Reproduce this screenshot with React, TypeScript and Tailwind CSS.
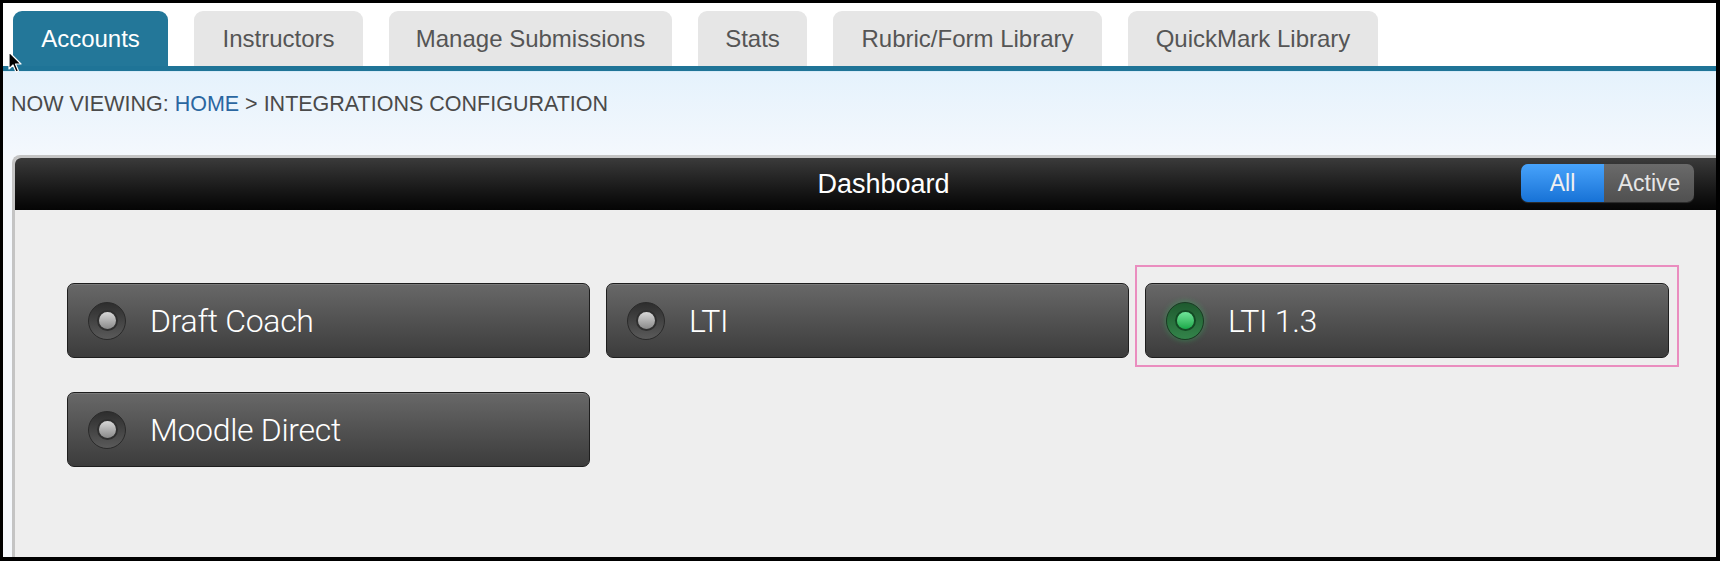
import React from "react";

const TABS = [
  { id: "accounts", label: "Accounts", width: "w-[155px]" },
  { id: "instructors", label: "Instructors", width: "w-[169px]" },
  { id: "submissions", label: "Manage Submissions", width: "w-[283px]" },
  { id: "stats", label: "Stats", width: "w-[109px]" },
  { id: "rubric", label: "Rubric/Form Library", width: "w-[269px]" },
  { id: "quickmark", label: "QuickMark Library", width: "w-[250px]" },
];

const INTEGRATIONS = [
  { id: "draft-coach", label: "Draft Coach", active: false },
  { id: "lti", label: "LTI", active: false },
  { id: "lti13", label: "LTI 1.3", active: true, highlighted: true },
  { id: "moodle", label: "Moodle Direct", active: false },
];

function RadioLight({ on }: { on: boolean }) {
  return (
    <span
      className={`flex items-center justify-center w-[38px] h-[38px] shrink-0 rounded-full border ${
        on
          ? "border-[#173d22] bg-gradient-to-b from-[#1f5a2f] to-[#33844a] shadow-[0_0_6px_rgba(40,200,90,0.45)]"
          : "border-[#2a2a2a] bg-gradient-to-b from-[#2e2e2e] to-[#5a5a5a]"
      }`}
    >
      <span
        className={`w-[17px] h-[17px] rounded-full ${
          on
            ? "bg-gradient-to-b from-[#6fe59a] to-[#12a848] shadow-[0_0_0_2px_#134a24]"
            : "bg-gradient-to-b from-[#d8d8d8] to-[#8a8a8a] shadow-[0_0_0_2px_#2f2f2f]"
        }`}
      />
    </span>
  );
}

function Cursor() {
  return (
    <svg className="absolute left-[5px] top-[48px] w-[14px] h-[24px]" viewBox="0 0 14 24">
      <path d="M1 1 L1 18 L5 14 L8 21 L10.5 20 L7.5 13 L13 13 Z" fill="#000" stroke="#fff" strokeWidth="1.2" strokeLinejoin="round" />
    </svg>
  );
}

export default function App() {
  return (
    <div className="w-[1720px] h-[561px] bg-black pt-[3px] pl-[3px] pr-[4px] pb-[4px] overflow-hidden font-['Liberation_Sans',Arial,sans-serif]">
      <div className="relative h-full flex flex-col bg-white">
        {/* top tabs */}
        <div className="flex items-end gap-[26px] pl-[10px] pt-[8px] border-b-[5px] border-[#1f7497]">
          {TABS.map((tab) => (
            <div
              key={tab.id}
              className={`${tab.width} h-[55px] flex items-center justify-center rounded-t-[9px] text-[24px] ${
                tab.id === "accounts" ? "bg-[#237799] text-white" : "bg-[#e6e6e6] text-[#555555]"
              }`}
            >
              {tab.label}
            </div>
          ))}
        </div>

        <div className="flex-1 flex flex-col bg-[#f5f8fc] border-t border-[#d7ebf8]">
          <div className="h-[83px] pl-[8px] pt-[20px] text-[21.5px] leading-[24px] text-[#4a4a4a] bg-gradient-to-b from-[#e5f2fc] to-[#f4f8fd]">
            NOW VIEWING: <span className="text-[#2a66a0]">HOME</span> &gt; INTEGRATIONS CONFIGURATION
          </div>

          {/* dashboard panel */}
          <div className="flex-1 ml-[9px] flex flex-col border-l-[3px] border-t-[3px] border-[#c4c4c4] rounded-tl-[8px] bg-[#eeeeee]">
            <div className="relative h-[52px] flex items-center justify-center pl-[36px] rounded-tl-[6px] bg-gradient-to-b from-[#3b3b3b] via-[#1e1e1e] to-[#050505]">
              <span className="text-white text-[27px] font-medium">Dashboard</span>
              <div className="absolute right-[22px] top-[6px] flex h-[38px] rounded-[7px] overflow-hidden text-[23px] shadow-[0_1px_1px_rgba(255,255,255,0.15)]">
                <span className="w-[83px] flex items-center justify-center bg-gradient-to-b from-[#47a3fb] to-[#1672d6] text-[#f0f0f0]">All</span>
                <span className="w-[90px] flex items-center justify-center bg-gradient-to-b from-[#6a6a6a] to-[#505050] text-[#e6e6e6]">Active</span>
              </div>
            </div>

            <div className="grid grid-cols-[523px_523px_524px] gap-x-[16px] gap-y-[34px] pl-[52px] pt-[73px]">
              {INTEGRATIONS.map((item) => (
                <div key={item.id} className="relative">
                  {item.highlighted && (
                    <div className="absolute -left-[10px] -right-[10px] -top-[18px] -bottom-[9px] border-2 border-[#ea8dbf]" />
                  )}
                  <div className="relative h-[75px] flex items-center gap-[24px] pl-[20px] rounded-[7px] border border-[#1e1e1e] bg-gradient-to-b from-[#686868] to-[#3c3c3c] shadow-[inset_0_1px_0_rgba(255,255,255,0.12)]">
                    <RadioLight on={item.active} />
                    <span className="text-white text-[32px] font-light font-['Roboto',sans-serif] tracking-[-0.3px]">{item.label}</span>
                  </div>
                </div>
              ))}
            </div>
          </div>
        </div>

        <Cursor />
      </div>
    </div>
  );
}
